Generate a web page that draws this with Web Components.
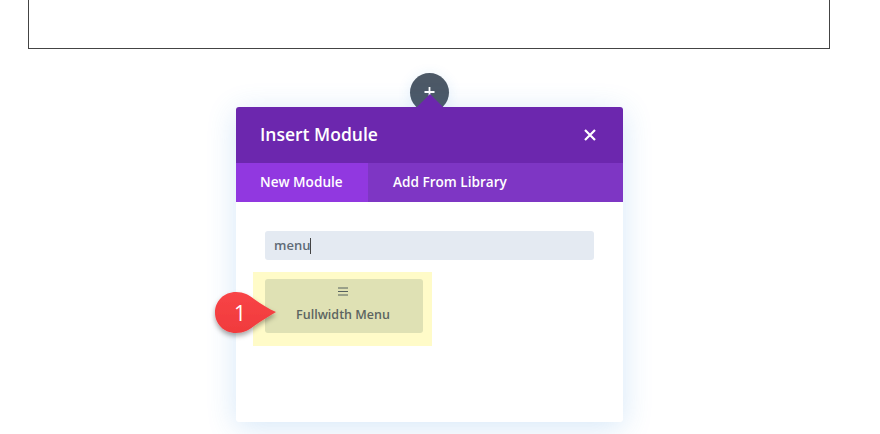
<!DOCTYPE html>
<html>
<head>
<meta charset="utf-8">
<style>
  html, body { margin: 0; background: #fff; }
  body { width: 880px; height: 434px; overflow: hidden; font-family: "Open Sans", "Liberation Sans", sans-serif; }
</style>
</head>
<body>
<builder-page>
  <insert-module title="Insert Module">
    <module-tabs active="New Module" other="Add From Library" slot="tabs"></module-tabs>
    <module-search value="menu"></module-search>
    <module-tile label="Fullwidth Menu"></module-tile>
  </insert-module>
</builder-page>

<script>
class BuilderPage extends HTMLElement {
  constructor() {
    super()
    this.attachShadow({ mode: "open" })
    this.shadowRoot.innerHTML = `
      <style>
        :host { display: block; width: 880px; height: 434px; overflow: hidden; }
        .frame {
          box-sizing: border-box;
          height: 49px;
          width: 802px;
          margin-left: 28px;
          border: 1px solid #444;
          border-top: none;
        }
        .stage {
          display: flex;
          flex-direction: column;
          align-items: center;
          width: 387px;
          margin: 24px 0 0 236px;
        }
        .add {
          width: 39px;
          height: 39px;
          margin-bottom: -5px;
          border-radius: 50%;
          background: #4c5866;
          display: flex;
          justify-content: center;
          box-shadow: 0 2px 14px rgba(43, 135, 218, .12);
        }
        .add svg { display: block; }
      </style>
      <div class="frame"></div>
      <div class="stage">
        <div class="add">
          <svg width="39" height="39" viewBox="0 0 39 39"><path d="M19.5 14v9M14.500 19h10" stroke="#fff" stroke-width="1.800" fill="none"/></svg>
        </div>
        <slot></slot>
      </div>
    `
  }
}

class InsertModule extends HTMLElement {
  constructor() {
    super()
    this.attachShadow({ mode: "open" })
    this.shadowRoot.innerHTML = `
      <style>
        :host {
          display: block;
          position: relative;
          box-sizing: border-box;
          width: 387px;
          height: 315px;
          border-radius: 3px;
          background: #fff;
          box-shadow: 0 5px 30px rgba(43, 135, 218, .2);
        }
        .arrow {
          position: absolute;
          left: 180px;
          top: -13px;
          width: 0;
          height: 0;
          border-left: 14px solid transparent;
          border-right: 14px solid transparent;
          border-bottom: 14px solid #6c27ae;
        }
        header {
          height: 56px;
          box-sizing: border-box;
          padding: 0 26px 2px 24px;
          display: flex;
          align-items: center;
          justify-content: space-between;
          background: #6c27ae;
          border-radius: 3px 3px 0 0;
          color: #fff;
        }
        h1 { margin: 0; font: 600 17.5px/24px "Open Sans", sans-serif; color: #fff; }
        .close { display: block; margin-top: 2px; }
        .body { padding: 29px 29px 0; }
      </style>
      <div class="arrow"></div>
      <header>
        <h1>${this.getAttribute("title")}</h1>
        <svg class="close" width="14" height="14" viewBox="0 0 14 14"><path d="M2 2l10 10M12 2L2 12" stroke="#fff" stroke-width="2.200" fill="none"/></svg>
      </header>
      <slot name="tabs"></slot>
      <div class="body"><slot></slot></div>
    `
  }
}

class ModuleTabs extends HTMLElement {
  constructor() {
    super()
    this.attachShadow({ mode: "open" })
    this.shadowRoot.innerHTML = `
      <style>
        :host {
          display: flex;
          height: 39px;
          background: #7e36c4;
          color: #fff;
          font: 600 13.6px/38px "Open Sans", sans-serif;
          white-space: nowrap;
        }
        .tab { padding: 0 25px; }
        .on { width: 132px; box-sizing: border-box; padding: 0 0 0 24px; background: #9138e0; }
      </style>
      <div class="tab on">${this.getAttribute("active")}</div>
      <div class="tab">${this.getAttribute("other")}</div>
    `
  }
}

class ModuleSearch extends HTMLElement {
  constructor() {
    super()
    this.attachShadow({ mode: "open" })
    this.shadowRoot.innerHTML = `
      <style>
        :host {
          display: flex;
          align-items: center;
          box-sizing: border-box;
          width: 329px;
          height: 29px;
          padding: 0 9px;
          border-radius: 3px;
          background: #e4eaf2;
          color: #5f6a77;
          font: 600 13px/29px "Open Sans", sans-serif;
        }
        .caret { width: 1px; height: 16px; background: #444; }
      </style>
      <span>${this.getAttribute("value")}</span><span class="caret"></span>
    `
  }
}

class ModuleTile extends HTMLElement {
  constructor() {
    super()
    this.attachShadow({ mode: "open" })
    this.shadowRoot.innerHTML = `
      <style>
        :host {
          display: block;
          position: relative;
          box-sizing: border-box;
          width: 179px;
          height: 74px;
          margin: 12px 0 0 -12px;
          padding: 7px 9px 13px 12px;
          background: #fffbc8;
        }
        .tile {
          box-sizing: border-box;
          height: 54px;
          padding-right: 2px;
          border-radius: 3px;
          background: #dfe1b4;
          color: #5c6561;
          display: flex;
          flex-direction: column;
          align-items: center;
          font: 600 12.5px/18px "Open Sans", sans-serif;
        }
        .tile svg { display: block; margin: 8px 0 10px; }
        .pin-wrap { position: absolute; left: -38px; top: 20px; width: 62px; height: 43px; }
        .num {
          position: absolute;
          left: 0;
          top: 0;
          width: 50px;
          text-align: center;
          color: #fff;
          font: 400 21px/42px "Open Sans", sans-serif;
        }
      </style>
      <div class="tile">
        <svg width="10" height="9" viewBox="0 0 10 9"><path d="M0 1h10M0 4.500h10M0 8h10" stroke="#55605f" stroke-width="1" fill="none"/></svg>
        <span>${this.getAttribute("label")}</span>
      </div>
      <div class="pin-wrap">
        <svg width="62" height="43" viewBox="0 0 62 43" style="overflow:visible;display:block">
          <defs>
            <linearGradient id="g" x1="0" y1="0" x2="0" y2="1"><stop offset="0" stop-color="#f84446"/><stop offset="1" stop-color="#f03a3d"/></linearGradient>
            <filter id="s" x="-30%" y="-30%" width="160%" height="170%"><feDropShadow dx="0" dy="3" stdDeviation="2.500" flood-color="#000" flood-opacity=".35"/></filter>
          </defs>
          <path d="M21 0C29 0 34 3 39 7C46 12 54 17 61 20C54 24 46 29 39 34C34 38 29 41 21 41C9 41 0 32 0 20.500C0 9 9 0 21 0Z" fill="url(#g)" filter="url(#s)"/>
        </svg>
        <span class="num">1</span>
      </div>
    `
  }
}

customElements.define("builder-page", BuilderPage)
customElements.define("insert-module", InsertModule)
customElements.define("module-tabs", ModuleTabs)
customElements.define("module-search", ModuleSearch)
customElements.define("module-tile", ModuleTile)
</script>
</body>
</html>
